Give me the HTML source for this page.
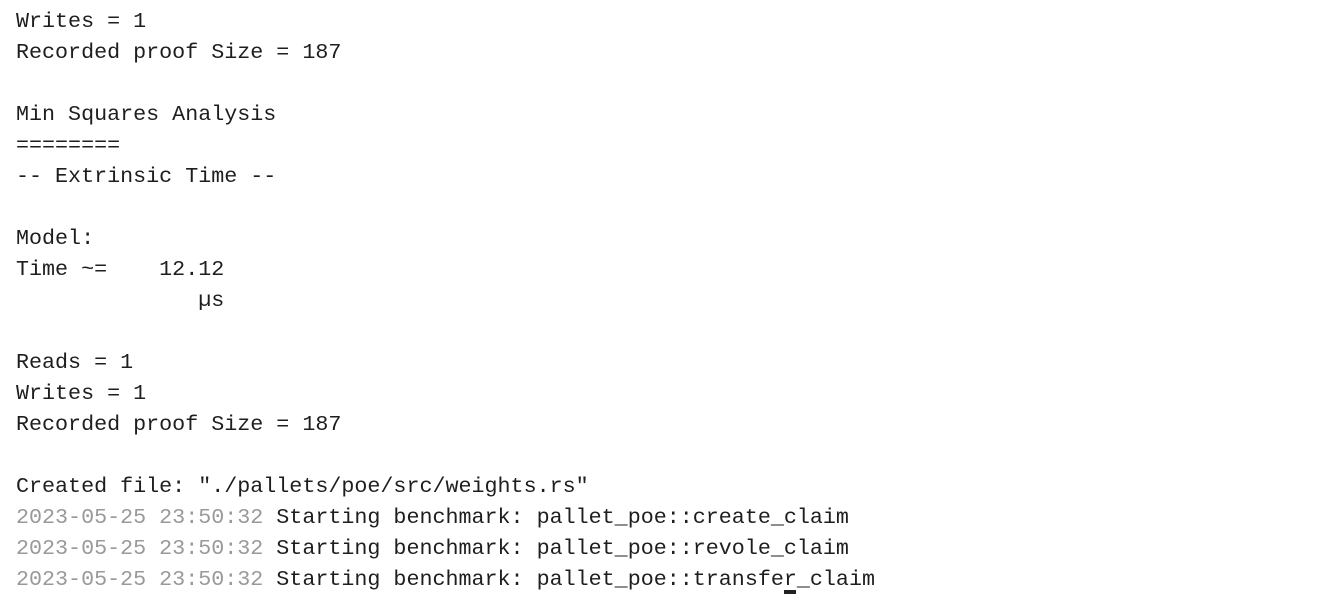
<!DOCTYPE html>
<html><head><meta charset="utf-8"><style>
html,body{margin:0;background:#fff;width:1327px;height:595px;overflow:hidden}
pre{margin:0;position:absolute;left:16px;top:6px;font-family:"Liberation Mono",monospace;font-size:21.7px;line-height:31px;color:#1e1e1e}
.g{color:#999}
.cur{position:absolute;left:784px;top:590px;width:12px;height:4px;background:#222}
</style></head><body>
<pre>Writes = 1
Recorded proof Size = 187

Min Squares Analysis
========
-- Extrinsic Time --

Model:
Time ~=    12.12
              µs

Reads = 1
Writes = 1
Recorded proof Size = 187

Created file: "./pallets/poe/src/weights.rs"
<span class="g">2023-05-25 23:50:32</span> Starting benchmark: pallet_poe::create_claim
<span class="g">2023-05-25 23:50:32</span> Starting benchmark: pallet_poe::revole_claim
<span class="g">2023-05-25 23:50:32</span> Starting benchmark: pallet_poe::transfer_claim</pre>
<div class="cur"></div>
</body></html>
